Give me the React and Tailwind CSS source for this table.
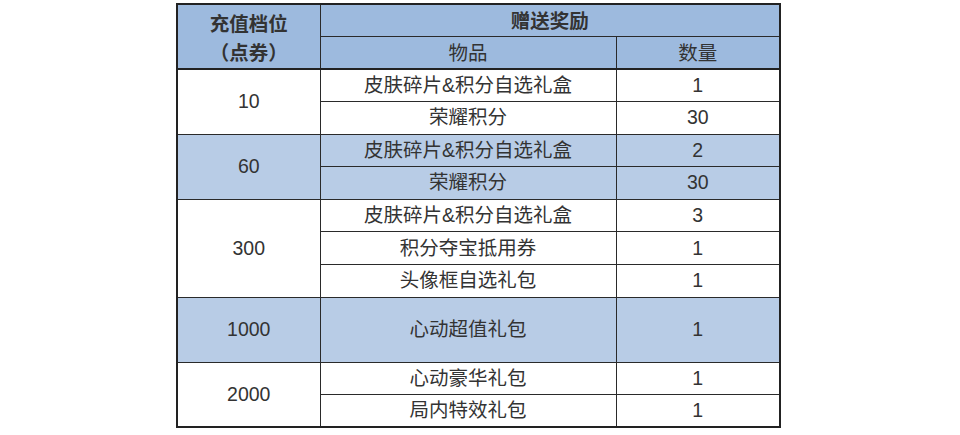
import React from 'react';

const groups = [
  {
    amount: '10',
    hl: false,
    items: [
      ['皮肤碎片&积分自选礼盒', '1'],
      ['荣耀积分', '30'],
    ],
  },
  {
    amount: '60',
    hl: true,
    items: [
      ['皮肤碎片&积分自选礼盒', '2'],
      ['荣耀积分', '30'],
    ],
  },
  {
    amount: '300',
    hl: false,
    items: [
      ['皮肤碎片&积分自选礼盒', '3'],
      ['积分夺宝抵用券', '1'],
      ['头像框自选礼包', '1'],
    ],
  },
  {
    amount: '1000',
    hl: true,
    tall: true,
    items: [['心动超值礼包', '1']],
  },
  {
    amount: '2000',
    hl: false,
    items: [
      ['心动豪华礼包', '1'],
      ['局内特效礼包', '1'],
    ],
  },
];

const cell = 'border border-[#2a2a2a] text-center align-middle p-0';

export default function App() {
  return (
    <div className="w-[960px] h-[435px] bg-white pt-[3px] font-['Liberation_Sans','Noto_Sans_CJK_SC',sans-serif] text-[19.5px] text-[#333]">
      <table className="ml-[176px] w-[603px] border-collapse border-2 border-[#222] table-fixed leading-none">
        <colgroup>
          <col className="w-[143px]" />
          <col className="w-[296px]" />
          <col className="w-[164px]" />
        </colgroup>
        <thead>
          <tr className="h-[32px] bg-[#9dbade]">
            <th rowSpan={2} className={`${cell} pt-[5px] font-bold leading-[29px] border-b-2 border-b-[#222]`}>
              充值档位
              <br />
              （点券）
            </th>
            <th colSpan={2} className={`${cell} pt-[2px] font-bold`}>
              赠送奖励
            </th>
          </tr>
          <tr className="h-[32px] bg-[#9dbade]">
            <th className={`${cell} pt-[2px] font-normal border-b-2 border-b-[#222]`}>物品</th>
            <th className={`${cell} pt-[2px] font-normal border-b-2 border-b-[#222]`}>数量</th>
          </tr>
        </thead>
        <tbody>
          {groups.map((g) =>
            g.items.map(([name, qty], i) => (
              <tr
                key={g.amount + name}
                className={`${g.tall ? 'h-[65px]' : 'h-[32.6px]'} ${g.hl ? 'bg-[#b8cce6]' : 'bg-white'}`}
              >
                {i === 0 && (
                  <td rowSpan={g.items.length} className={cell}>
                    {g.amount}
                  </td>
                )}
                <td className={cell}>{name}</td>
                <td className={cell}>{qty}</td>
              </tr>
            ))
          )}
        </tbody>
      </table>
    </div>
  );
}
